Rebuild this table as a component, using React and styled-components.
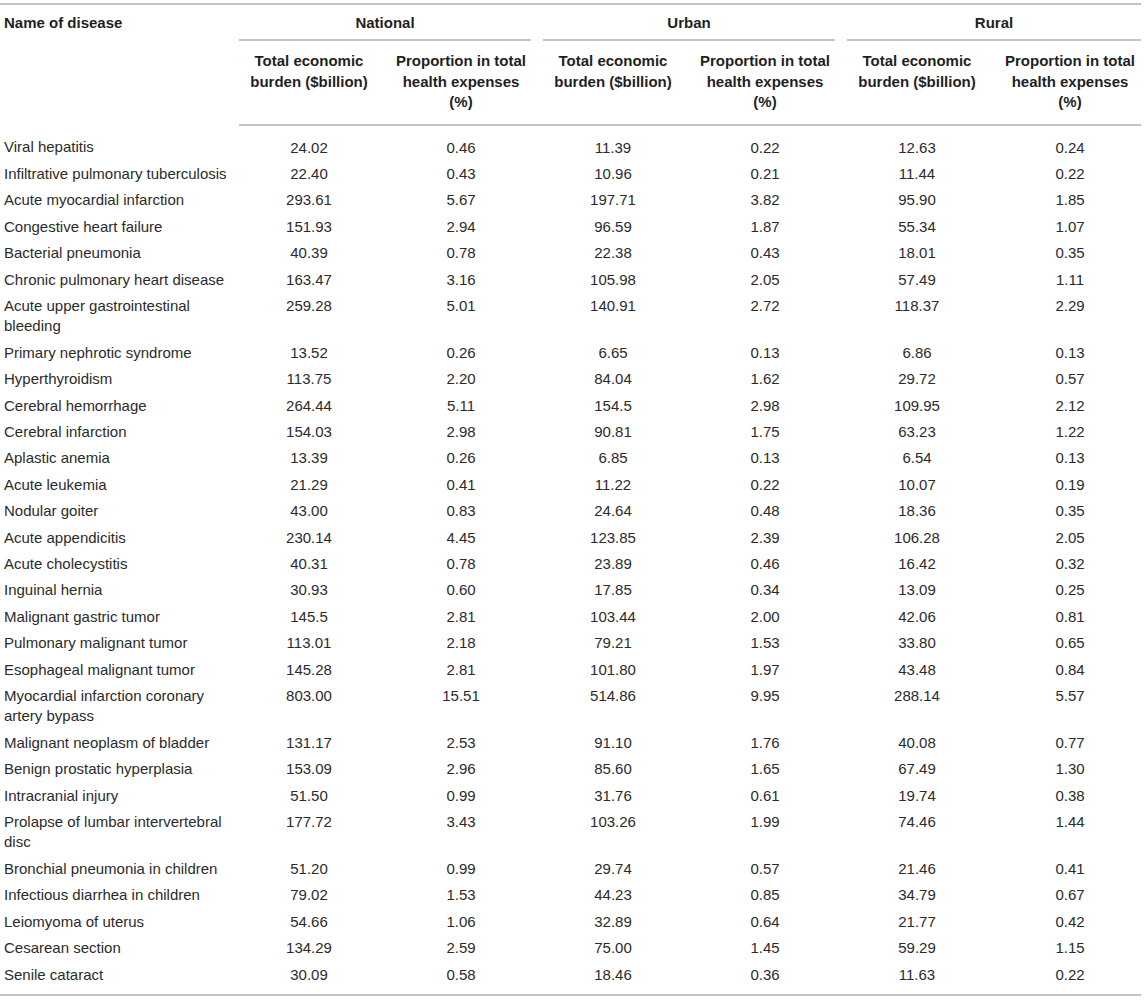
import React from "react";
import styled, { createGlobalStyle } from "styled-components";

const GlobalStyle = createGlobalStyle`
  html, body {
    margin: 0;
    padding: 0;
    background: #fff;
  }
  body {
    font-family: "Liberation Sans", Arial, Helvetica, sans-serif;
    color: #2b2b2b;
  }
`;

const Wrap = styled.div`
  padding-top: 3px;
  width: 1141px;
`;

const Table = styled.table`
  width: 1141px;
  border-collapse: collapse;
  table-layout: fixed;
  font-size: 15px;
  border-top: 2px solid #c4c4c4;
  border-bottom: 2px solid #c4c4c4;
`;

const Col = styled.col`
  width: ${(p) => p.$w}px;
`;

const HeadRow = styled.tr`
  &:last-child th {
    border-bottom: 2px solid #c4c4c4;
  }
`;

const NameHead = styled.th`
  text-align: left;
  vertical-align: top;
  font-weight: bold;
  line-height: 20px;
  padding: 8px 0 0 4px;
  color: #1f1f1f;
`;

const GroupHead = styled.th`
  font-weight: bold;
  line-height: 20px;
  padding: 8px ${(p) => (p.$last ? "0" : "12px")} 0 0;
  text-align: center;
  color: #1f1f1f;
`;

const GroupLabel = styled.div`
  padding-bottom: 6px;
  border-bottom: 2px solid #c4c4c4;
`;

const SubHead = styled.th`
  font-weight: bold;
  line-height: 20.5px;
  text-align: center;
  vertical-align: top;
  padding: 10px ${(p) => (p.$last ? "0" : "12px")} 11px 0;
  color: #1f1f1f;
`;

const Row = styled.tr`
  &:first-child td {
    padding-top: 12px;
  }
  &:last-child td {
    padding-bottom: 9px;
  }
`;

const NameCell = styled.td`
  text-align: left;
  vertical-align: top;
  line-height: 20.4px;
  padding: 3px 3px 3px 4px;
`;

const NumCell = styled.td`
  text-align: center;
  vertical-align: top;
  line-height: 20.4px;
  padding: 3px ${(p) => (p.$last ? "0" : "12px")} 3px 0;
`;

const rows = [
  ["Viral hepatitis", "24.02", "0.46", "11.39", "0.22", "12.63", "0.24"],
  ["Infiltrative pulmonary tuberculosis", "22.40", "0.43", "10.96", "0.21", "11.44", "0.22"],
  ["Acute myocardial infarction", "293.61", "5.67", "197.71", "3.82", "95.90", "1.85"],
  ["Congestive heart failure", "151.93", "2.94", "96.59", "1.87", "55.34", "1.07"],
  ["Bacterial pneumonia", "40.39", "0.78", "22.38", "0.43", "18.01", "0.35"],
  ["Chronic pulmonary heart disease", "163.47", "3.16", "105.98", "2.05", "57.49", "1.11"],
  ["Acute upper gastrointestinal bleeding", "259.28", "5.01", "140.91", "2.72", "118.37", "2.29"],
  ["Primary nephrotic syndrome", "13.52", "0.26", "6.65", "0.13", "6.86", "0.13"],
  ["Hyperthyroidism", "113.75", "2.20", "84.04", "1.62", "29.72", "0.57"],
  ["Cerebral hemorrhage", "264.44", "5.11", "154.5", "2.98", "109.95", "2.12"],
  ["Cerebral infarction", "154.03", "2.98", "90.81", "1.75", "63.23", "1.22"],
  ["Aplastic anemia", "13.39", "0.26", "6.85", "0.13", "6.54", "0.13"],
  ["Acute leukemia", "21.29", "0.41", "11.22", "0.22", "10.07", "0.19"],
  ["Nodular goiter", "43.00", "0.83", "24.64", "0.48", "18.36", "0.35"],
  ["Acute appendicitis", "230.14", "4.45", "123.85", "2.39", "106.28", "2.05"],
  ["Acute cholecystitis", "40.31", "0.78", "23.89", "0.46", "16.42", "0.32"],
  ["Inguinal hernia", "30.93", "0.60", "17.85", "0.34", "13.09", "0.25"],
  ["Malignant gastric tumor", "145.5", "2.81", "103.44", "2.00", "42.06", "0.81"],
  ["Pulmonary malignant tumor", "113.01", "2.18", "79.21", "1.53", "33.80", "0.65"],
  ["Esophageal malignant tumor", "145.28", "2.81", "101.80", "1.97", "43.48", "0.84"],
  ["Myocardial infarction coronary artery bypass", "803.00", "15.51", "514.86", "9.95", "288.14", "5.57"],
  ["Malignant neoplasm of bladder", "131.17", "2.53", "91.10", "1.76", "40.08", "0.77"],
  ["Benign prostatic hyperplasia", "153.09", "2.96", "85.60", "1.65", "67.49", "1.30"],
  ["Intracranial injury", "51.50", "0.99", "31.76", "0.61", "19.74", "0.38"],
  ["Prolapse of lumbar intervertebral disc", "177.72", "3.43", "103.26", "1.99", "74.46", "1.44"],
  ["Bronchial pneumonia in children", "51.20", "0.99", "29.74", "0.57", "21.46", "0.41"],
  ["Infectious diarrhea in children", "79.02", "1.53", "44.23", "0.85", "34.79", "0.67"],
  ["Leiomyoma of uterus", "54.66", "1.06", "32.89", "0.64", "21.77", "0.42"],
  ["Cesarean section", "134.29", "2.59", "75.00", "1.45", "59.29", "1.15"],
  ["Senile cataract", "30.09", "0.58", "18.46", "0.36", "11.63", "0.22"],
];

const groups = ["National", "Urban", "Rural"];
const widths = [239, 152, 152, 152, 152, 152, 142];

export default function App() {
  return (
    <Wrap>
      <GlobalStyle />
      <Table>
        <colgroup>
          {widths.map((w, i) => (
            <Col key={i} $w={w} />
          ))}
        </colgroup>
        <thead>
          <HeadRow>
            <NameHead rowSpan={2}>Name of disease</NameHead>
            {groups.map((g, i) => (
              <GroupHead key={g} colSpan={2} $last={i === groups.length - 1}>
                <GroupLabel>{g}</GroupLabel>
              </GroupHead>
            ))}
          </HeadRow>
          <HeadRow>
            {groups.map((g, i) => (
              <React.Fragment key={g}>
                <SubHead>
                  Total economic
                  <br />
                  burden ($billion)
                </SubHead>
                <SubHead $last={i === groups.length - 1}>
                  Proportion in total
                  <br />
                  health expenses
                  <br />
                  (%)
                </SubHead>
              </React.Fragment>
            ))}
          </HeadRow>
        </thead>
        <tbody>
          {rows.map((r) => (
            <Row key={r[0]}>
              <NameCell>{r[0]}</NameCell>
              {r.slice(1).map((v, i) => (
                <NumCell key={i} $last={i === 5}>
                  {v}
                </NumCell>
              ))}
            </Row>
          ))}
        </tbody>
      </Table>
    </Wrap>
  );
}
